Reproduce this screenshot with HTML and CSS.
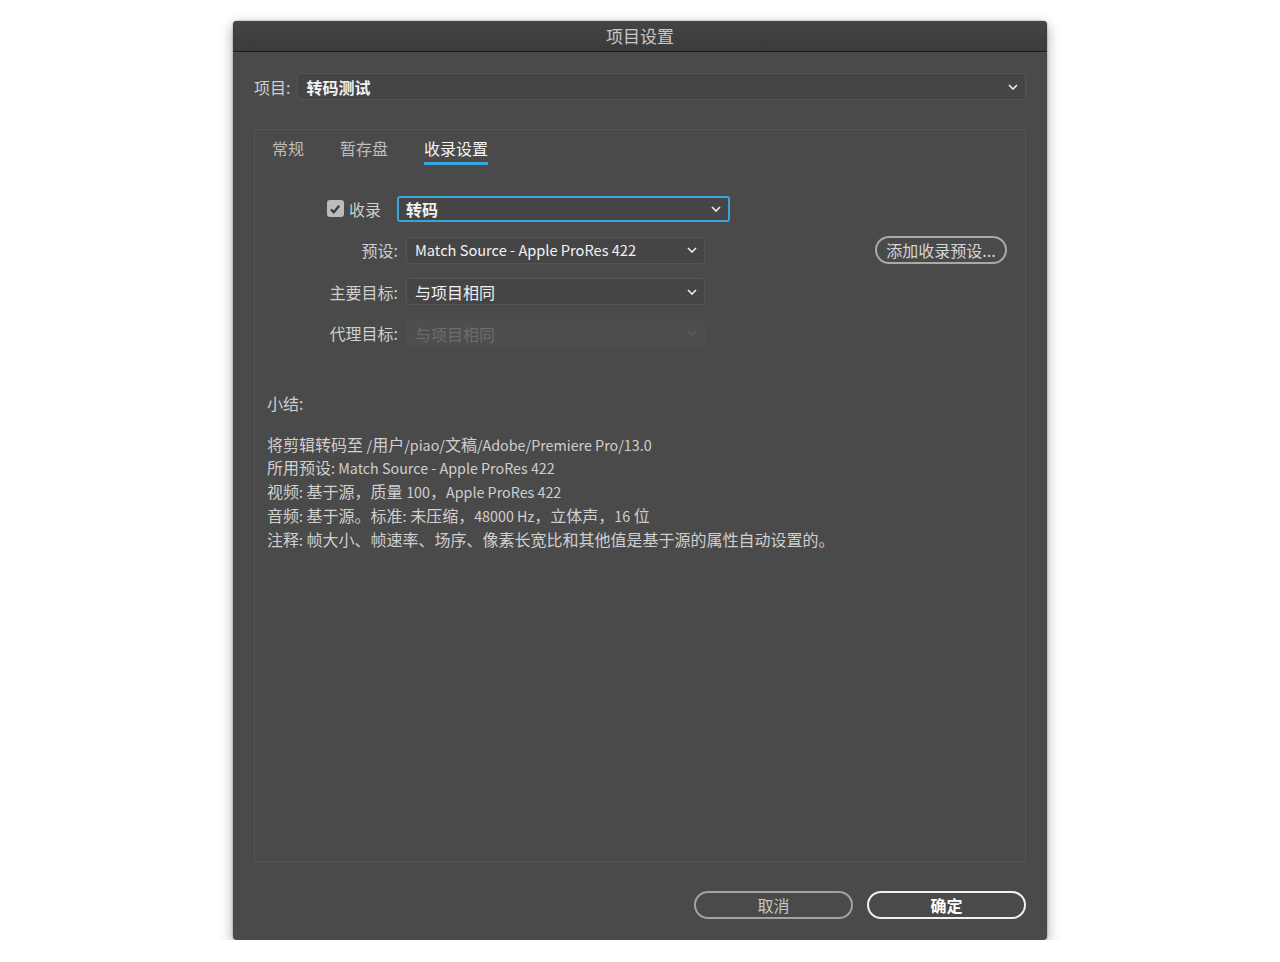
FILE: index.html
```html
<!DOCTYPE html>
<html lang="zh-CN">

<head>
    <meta charset="UTF-8" />
    <title>项目设置</title>
    <link rel="stylesheet" href="styles.css">
</head>

<body>

    <div class="dialog">
        <div class="titlebar">项目设置</div>

        <div class="content">
            <div class="project-row">
                <span class="label">项目:</span>
                <div class="select select-wide">
                    <span class="value bold">转码测试</span>
                    <svg class="chev" viewBox="0 0 10 6"><polyline points="1,1 5,5 9,1" /></svg>
                </div>
            </div>

            <div class="panel">
                <div class="tabs">
                    <span class="tab">常规</span>
                    <span class="tab">暂存盘</span>
                    <span class="tab active">收录设置</span>
                </div>

                <div class="form">
                    <div class="row">
                        <div class="row-label first">
                            <span class="checkbox">
                                <svg viewBox="0 0 12 12"><polyline points="2.5,6.3 5,8.8 9.6,3.2" /></svg>
                            </span>
                            <span>收录</span>
                        </div>
                        <div class="select select-focus">
                            <span class="value bold">转码</span>
                            <svg class="chev" viewBox="0 0 10 6"><polyline points="1,1 5,5 9,1" /></svg>
                        </div>
                    </div>
                    <div class="row">
                        <div class="row-label">预设:</div>
                        <div class="select select-mid">
                            <span class="value en">Match Source - Apple ProRes 422</span>
                            <svg class="chev" viewBox="0 0 10 6"><polyline points="1,1 5,5 9,1" /></svg>
                        </div>
                        <button class="pill add">添加收录预设...</button>
                    </div>
                    <div class="row">
                        <div class="row-label">主要目标:</div>
                        <div class="select select-mid">
                            <span class="value">与项目相同</span>
                            <svg class="chev" viewBox="0 0 10 6"><polyline points="1,1 5,5 9,1" /></svg>
                        </div>
                    </div>
                    <div class="row">
                        <div class="row-label">代理目标:</div>
                        <div class="select select-mid disabled">
                            <span class="value">与项目相同</span>
                            <svg class="chev" viewBox="0 0 10 6"><polyline points="1,1 5,5 9,1" /></svg>
                        </div>
                    </div>
                </div>

                <div class="summary">
                    <div class="summary-title">小结:</div>
                    <div class="summary-lines">
                        <div>将剪辑转码至 <span class="en">/</span>用户<span class="en">/piao/</span>文稿<span class="en">/Adobe/Premiere Pro/13.0</span></div>
                        <div>所用预设<span class="en">: Match Source - Apple ProRes 422</span></div>
                        <div>视频<span class="en">:</span> 基于源，质量 <span class="en">100</span>，<span class="en">Apple ProRes 422</span></div>
                        <div>音频<span class="en">:</span> 基于源。标准<span class="en">:</span> 未压缩，<span class="en">48000 Hz</span>，立体声，<span class="en">16</span> 位</div>
                        <div>注释<span class="en">:</span> 帧大小、帧速率、场序、像素长宽比和其他值是基于源的属性自动设置的。</div>
                    </div>
                </div>
            </div>

            <div class="footer">
                <button class="pill cancel">取消</button>
                <button class="pill ok">确定</button>
            </div>
        </div>
    </div>

</body>

</html>
```

FILE: styles.css
```css
html,
body {
    margin: 0;
    padding: 0;
    background: #ffffff;
    font-family: "Noto Sans CJK SC", "Noto Sans", sans-serif;
}
.en { font-size: 14.3px; }
.dialog {
    margin: 21px 0 0 233px;
    width: 814px;
    height: 919px;
    background: #4a4a4a;
    border-radius: 4px;
    box-shadow: 0 4px 14px rgba(0, 0, 0, 0.35), 0 0 2px rgba(0, 0, 0, 0.4);
    display: flex;
    flex-direction: column;
    overflow: hidden;
}
.titlebar {
    height: 30px;
    line-height: 30px;
    text-align: center;
    color: #c8c8c8;
    font-size: 17px;
    background: linear-gradient(#444444, #3b3b3b);
    border-bottom: 1px solid #1c1c1c;
}
.content {
    flex: 1;
    display: flex;
    flex-direction: column;
    padding: 21px 21px 21px 21px;
}
.project-row {
    display: flex;
    align-items: center;
    gap: 7px;
}
.label {
    color: #cfcfcf;
    font-size: 16px;
}
.select {
    display: flex;
    align-items: center;
    justify-content: space-between;
    box-sizing: border-box;
    height: 27px;
    padding: 0 7px 0 8px;
    background: #454545;
    border: 1px solid #555555;
    border-radius: 3px;
    color: #f2f2f2;
    font-size: 16px;
}
.select-wide { flex: 1; }
.select-mid { width: 299px; }
.select-focus {
    width: 333px;
    height: 26px;
    border: 2px solid #3aa3dc;
    padding-left: 7px;
}
.value { line-height: 1; padding-top: 1px; }
.value.bold { font-weight: bold; }
.select .en { font-size: 14.6px; }
.chev {
    width: 10px;
    height: 6px;
    fill: none;
    stroke: #eeeeee;
    stroke-width: 1.6;
}
.disabled {
    background: #4e4e4e;
    border-color: #4e4e4e;
    color: #6c6c6c;
}
.disabled .chev { stroke: #5e5e5e; }
.panel {
    margin-top: 29px;
    height: 733px;
    box-sizing: border-box;
    border: 1px solid #575757;
    border-radius: 3px;
    display: flex;
    flex-direction: column;
}
.tabs {
    display: flex;
    gap: 36px;
    padding: 6px 0 0 17px;
}
.tab {
    color: #bdbdbd;
    font-size: 16px;
    padding-bottom: 2px;
    border-bottom: 3px solid transparent;
}
.tab.active {
    color: #f4f4f4;
    border-bottom-color: #38a6de;
}
.form {
    margin-top: 30px;
    display: flex;
    flex-direction: column;
    gap: 14.5px;
}
.row {
    display: flex;
    align-items: center;
    height: 27px;
}
.row-label {
    width: 143px;
    text-align: right;
    color: #cfcfcf;
    font-size: 16px;
    margin-right: 8px;
}
.row-label.first {
    display: flex;
    justify-content: flex-end;
    align-items: center;
    gap: 5px;
    margin-right: 0;
    padding-right: 16px;
    box-sizing: border-box;
    width: 142px;
}
.checkbox {
    width: 17px;
    height: 17px;
    border-radius: 3px;
    background: #bcbcbc;
    display: flex;
    align-items: center;
    justify-content: center;
}
.checkbox svg {
    width: 14px;
    height: 14px;
    fill: none;
    stroke: #3c3c3c;
    stroke-width: 2;
}
.pill {
    box-sizing: border-box;
    height: 28px;
    border-radius: 14px;
    background: transparent;
    font-family: inherit;
    font-size: 16px;
    padding: 0;
    cursor: pointer;
}
.add {
    margin-left: auto;
    margin-right: 18px;
    width: 132px;
    border: 2px solid #a9a9a9;
    color: #d6d6d6;
}
.summary {
    margin-top: 44px;
    padding-left: 12px;
    color: #cfcfcf;
    font-size: 16px;
}
.summary-title {
    margin-bottom: 18px;
}
.summary-lines div {
    line-height: 23.8px;
}
.footer {
    margin-top: 29px;
    display: flex;
    justify-content: flex-end;
    gap: 14px;
}
.footer .pill {
    width: 159px;
}
.cancel {
    border: 2px solid #a3a3a3;
    color: #c6c6c6;
}
.ok {
    border: 2px solid #f0f0f0;
    color: #ffffff;
    font-weight: bold;
}
```
